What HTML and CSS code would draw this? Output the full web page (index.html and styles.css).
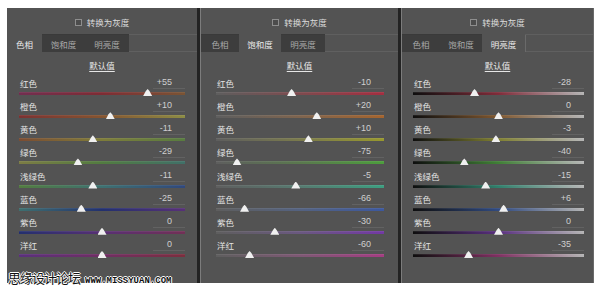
FILE: index.html
```html
<!DOCTYPE html>
<html lang="zh">
<head>
<meta charset="utf-8">
<title>黑白调整</title>
<link rel="stylesheet" href="styles.css">
</head>
<body>
<div class="stage">
  <section class="panel p1 hue">
    <div class="title"><span class="check"></span><span>转换为灰度</span></div>
    <div class="tabs"><span class="tab active w1">色相</span><span class="tab w2">饱和度</span><span class="tab w3">明亮度</span><span class="tab-rest"></span></div>
    <div class="default"><span>默认值</span></div>
    <div class="rows">
      <div class="row r1"><div class="head"><span class="label">红色</span><span class="value">+55</span></div><div class="slide"><div class="bar"></div><div class="thumb" style="left:77.5%"></div></div></div>
      <div class="row r2"><div class="head"><span class="label">橙色</span><span class="value">+10</span></div><div class="slide"><div class="bar"></div><div class="thumb" style="left:55%"></div></div></div>
      <div class="row r3"><div class="head"><span class="label">黄色</span><span class="value">-11</span></div><div class="slide"><div class="bar"></div><div class="thumb" style="left:44.5%"></div></div></div>
      <div class="row r4"><div class="head"><span class="label">绿色</span><span class="value">-29</span></div><div class="slide"><div class="bar"></div><div class="thumb" style="left:35.5%"></div></div></div>
      <div class="row r5"><div class="head"><span class="label">浅绿色</span><span class="value">-11</span></div><div class="slide"><div class="bar"></div><div class="thumb" style="left:44.5%"></div></div></div>
      <div class="row r6"><div class="head"><span class="label">蓝色</span><span class="value">-25</span></div><div class="slide"><div class="bar"></div><div class="thumb" style="left:37.5%"></div></div></div>
      <div class="row r7"><div class="head"><span class="label">紫色</span><span class="value">0</span></div><div class="slide"><div class="bar"></div><div class="thumb" style="left:50%"></div></div></div>
      <div class="row r8"><div class="head"><span class="label">洋红</span><span class="value">0</span></div><div class="slide"><div class="bar"></div><div class="thumb" style="left:50%"></div></div></div>
    </div>
  </section>
  <div class="sep"></div>
  <section class="panel p2 sat">
    <div class="title"><span class="check"></span><span>转换为灰度</span></div>
    <div class="tabs"><span class="tab w1">色相</span><span class="tab active w2">饱和度</span><span class="tab w3">明亮度</span><span class="tab-rest"></span></div>
    <div class="default"><span>默认值</span></div>
    <div class="rows">
      <div class="row r1"><div class="head"><span class="label">红色</span><span class="value">-10</span></div><div class="slide"><div class="bar"></div><div class="thumb" style="left:45%"></div></div></div>
      <div class="row r2"><div class="head"><span class="label">橙色</span><span class="value">+20</span></div><div class="slide"><div class="bar"></div><div class="thumb" style="left:60%"></div></div></div>
      <div class="row r3"><div class="head"><span class="label">黄色</span><span class="value">+10</span></div><div class="slide"><div class="bar"></div><div class="thumb" style="left:55%"></div></div></div>
      <div class="row r4"><div class="head"><span class="label">绿色</span><span class="value">-75</span></div><div class="slide"><div class="bar"></div><div class="thumb" style="left:12.5%"></div></div></div>
      <div class="row r5"><div class="head"><span class="label">浅绿色</span><span class="value">-5</span></div><div class="slide"><div class="bar"></div><div class="thumb" style="left:47.5%"></div></div></div>
      <div class="row r6"><div class="head"><span class="label">蓝色</span><span class="value">-66</span></div><div class="slide"><div class="bar"></div><div class="thumb" style="left:17%"></div></div></div>
      <div class="row r7"><div class="head"><span class="label">紫色</span><span class="value">-30</span></div><div class="slide"><div class="bar"></div><div class="thumb" style="left:35%"></div></div></div>
      <div class="row r8"><div class="head"><span class="label">洋红</span><span class="value">-60</span></div><div class="slide"><div class="bar"></div><div class="thumb" style="left:20%"></div></div></div>
    </div>
  </section>
  <div class="sep"></div>
  <section class="panel p3 lum">
    <div class="title"><span class="check"></span><span>转换为灰度</span></div>
    <div class="tabs"><span class="tab w1">色相</span><span class="tab w2">饱和度</span><span class="tab active w3">明亮度</span><span class="tab-rest"></span></div>
    <div class="default"><span>默认值</span></div>
    <div class="rows">
      <div class="row r1"><div class="head"><span class="label">红色</span><span class="value">-28</span></div><div class="slide"><div class="bar"></div><div class="thumb" style="left:36%"></div></div></div>
      <div class="row r2"><div class="head"><span class="label">橙色</span><span class="value">0</span></div><div class="slide"><div class="bar"></div><div class="thumb" style="left:50%"></div></div></div>
      <div class="row r3"><div class="head"><span class="label">黄色</span><span class="value">-3</span></div><div class="slide"><div class="bar"></div><div class="thumb" style="left:48.5%"></div></div></div>
      <div class="row r4"><div class="head"><span class="label">绿色</span><span class="value">-40</span></div><div class="slide"><div class="bar"></div><div class="thumb" style="left:30%"></div></div></div>
      <div class="row r5"><div class="head"><span class="label">浅绿色</span><span class="value">-15</span></div><div class="slide"><div class="bar"></div><div class="thumb" style="left:42.5%"></div></div></div>
      <div class="row r6"><div class="head"><span class="label">蓝色</span><span class="value">+6</span></div><div class="slide"><div class="bar"></div><div class="thumb" style="left:53%"></div></div></div>
      <div class="row r7"><div class="head"><span class="label">紫色</span><span class="value">0</span></div><div class="slide"><div class="bar"></div><div class="thumb" style="left:50%"></div></div></div>
      <div class="row r8"><div class="head"><span class="label">洋红</span><span class="value">-35</span></div><div class="slide"><div class="bar"></div><div class="thumb" style="left:32.5%"></div></div></div>
    </div>
  </section>
  <div class="watermark"><span class="wm-cn">思缘设计论坛</span><span class="wm-en">WWW.MISSYUAN.COM</span></div>
</div>
</body>
</html>
```
FILE: styles.css
```css
* { box-sizing: border-box; }
html, body { margin: 0; padding: 0; background: #fff; }
body {
  font-family: "Noto Sans CJK SC", "Noto Sans", sans-serif;
  color: #e2e2e2;
}
.stage {
  position: relative;
  display: flex;
  padding: 8px 0 0 7px;
  height: 296px;
}
.panel {
  height: 275px;
  background: #535353;
  display: flex;
  flex-direction: column;
}
.p1 { width: 190px; }
.p2 { width: 198px; border-left: 1px solid #7c7c7c; }
.p3 { width: 193px; border-left: 1px solid #7c7c7c; border-right: 1px solid #6a6a6a; }
.sep { width: 3px; height: 275px; background: #232323; }

.title {
  height: 26px;
  display: flex;
  align-items: center;
  justify-content: center;
  gap: 5px;
  font-size: 8.5px;
  color: #dcdcdc;
  padding-top: 2px;
}
.check {
  width: 7px;
  height: 7px;
  border: 1px solid #8e8e8e;
  background: #4c4c4c;
}
.tabs {
  height: 18px;
  display: flex;
  font-size: 8.5px;
}
.tab {
  display: flex;
  align-items: center;
  justify-content: center;
  background: #3d3d3d;
  color: #a9a9a9;
  border-top: 1px solid #3a3a3a;
}
.tab.active {
  background: #535353;
  color: #ececec;
  border-top: 1px solid #535353;
}
.p3 .tab.active { border-right: 1px solid #6a6a6a; }
.w1 { width: 38px; }
.w2 { width: 42px; }
.w3 { width: 44px; }
.p1 .w1 { width: 35px; }
.p1 .w2 { width: 43px; }
.tab-rest {
  flex: 1;
  border-top: 1px solid #5f5f5f;
  border-bottom: 1px solid #606060;
}
.default {
  height: 25px;
  display: flex;
  align-items: center;
  justify-content: center;
  font-size: 8.5px;
  color: #e6e6e6;
}
.default span {
  text-decoration: underline;
  text-underline-offset: 2px;
}
.rows {
  display: flex;
  flex-direction: column;
}
.p1 .rows { padding: 0 12px 0 12px; }
.p2 .rows { padding: 0 14px 0 15px; }
.p3 .rows { padding: 0 9px 0 11px; }
.row { height: 23.15px; }
.head {
  height: 12px;
  display: flex;
  justify-content: space-between;
  align-items: center;
}
.label {
  padding-left: 1px;
  font-size: 8.5px;
  color: #e4e4e4;
}
.value {
  width: 32px;
  height: 12px;
  line-height: 11px;
  text-align: right;
  padding-right: 13px;
  font-family: "Liberation Sans", Arial, sans-serif;
  font-size: 9px;
  color: #cfcfcf;
  border-bottom: 1px solid #626262;
}
.slide {
  position: relative;
  height: 11px;
}
.bar {
  position: absolute;
  left: 0;
  right: 0;
  top: 3px;
  height: 3px;
  border-top: 1px solid rgba(255,255,255,0.07);
}
.thumb {
  position: absolute;
  top: 0;
  width: 9px;
  height: 7px;
  margin-left: -4.5px;
  background: #f0f0f0;
  clip-path: polygon(50% 0, 70% 30%, 100% 100%, 0 100%, 30% 30%);
}

/* Hue panel */
.hue .r1 .bar { background: linear-gradient(90deg, #722e50, #7e2c34 50%, #7a5434); }
.hue .r2 .bar { background: linear-gradient(90deg, #7c3232, #855430 50%, #8c8c44); }
.hue .r3 .bar { background: linear-gradient(90deg, #7c4c32, #7e7c3a 50%, #587c40); }
.hue .r4 .bar { background: linear-gradient(90deg, #7c7c44, #527c40 50%, #407068); }
.hue .r5 .bar { background: linear-gradient(90deg, #527c40, #3e7070 50%, #30487c); }
.hue .r6 .bar { background: linear-gradient(90deg, #3e7070, #22306e 50%, #583078); }
.hue .r7 .bar { background: linear-gradient(90deg, #24306e, #583074 50%, #723056); }
.hue .r8 .bar { background: linear-gradient(90deg, #5a307c, #702e64 50%, #7c2e3e); }

/* Saturation panel */
.sat .r1 .bar { background: linear-gradient(90deg, #5e5e5e, #7e4a4e 50%, #a42e40); }
.sat .r2 .bar { background: linear-gradient(90deg, #5e5e5e, #7e644e 50%, #a4642e); }
.sat .r3 .bar { background: linear-gradient(90deg, #5e5e5e, #7a7a4c 50%, #98982e); }
.sat .r4 .bar { background: linear-gradient(90deg, #5e5e5e, #5a784e 50%, #4c9e3c); }
.sat .r5 .bar { background: linear-gradient(90deg, #5e5e5e, #567a70 50%, #3c9e80); }
.sat .r6 .bar { background: linear-gradient(90deg, #5e5e5e, #546280 50%, #3c589e); }
.sat .r7 .bar { background: linear-gradient(90deg, #5e5e5e, #6a5880 50%, #7238a4); }
.sat .r8 .bar { background: linear-gradient(90deg, #5e5e5e, #7e5874 50%, #a43c82); }

/* Luminance panel */
.lum .r1 .bar { background: linear-gradient(90deg, #0e0e0e, #802c3a 50%, #b4b4b4); }
.lum .r2 .bar { background: linear-gradient(90deg, #0e0e0e, #805830 50%, #b4b4b4); }
.lum .r3 .bar { background: linear-gradient(90deg, #0e0e0e, #808032 50%, #b6b6b6); }
.lum .r4 .bar { background: linear-gradient(90deg, #0e0e0e, #408036 50%, #b6b6b6); }
.lum .r5 .bar { background: linear-gradient(90deg, #0e0e0e, #30806c 50%, #b6b6b6); }
.lum .r6 .bar { background: linear-gradient(90deg, #0e0e0e, #304a80 50%, #b4b4b4); }
.lum .r7 .bar { background: linear-gradient(90deg, #0e0e0e, #5a3080 50%, #b4b4b4); }
.lum .r8 .bar { background: linear-gradient(90deg, #0e0e0e, #803062 50%, #b4b4b4); }

.watermark {
  position: absolute;
  left: 8px;
  top: 270px;
  display: flex;
  align-items: baseline;
  gap: 5px;
  color: #111;
  text-shadow: 1px 0 0 #fff, -1px 0 0 #fff, 0 1px 0 #fff, 0 -1px 0 #fff;
}
.wm-cn {
  font-size: 13px;
  line-height: 16px;
  letter-spacing: -1px;
}
.wm-en {
  font-family: "Liberation Mono", monospace;
  font-weight: bold;
  font-size: 9px;
}
```
